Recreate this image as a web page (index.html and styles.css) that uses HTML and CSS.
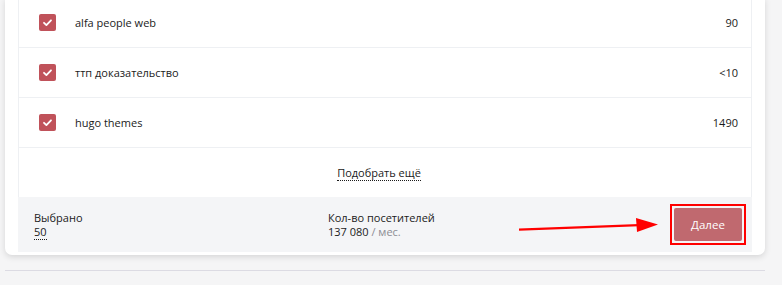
FILE: index.html
```html
<!DOCTYPE html>
<html lang="ru">
<head>
    <meta charset="UTF-8">
    <meta name="viewport" content="width=device-width, initial-scale=1.0">
    <title>Подбор запросов</title>
    <link rel="stylesheet" href="styles.css">
</head>
<body>
    <div class="page">
        <div class="card">
            <div class="list">
                <div class="row">
                    <span class="check"><svg viewBox="0 0 17 17" width="17" height="17"><path d="M5 8.8l2.4 2.3L12 6.3" fill="none" stroke="#fff" stroke-width="1.8" stroke-linecap="round" stroke-linejoin="round"/></svg></span>
                    <span class="phrase">alfa people web</span>
                    <span class="count">90</span>
                </div>
                <div class="row">
                    <span class="check"><svg viewBox="0 0 17 17" width="17" height="17"><path d="M5 8.8l2.4 2.3L12 6.3" fill="none" stroke="#fff" stroke-width="1.8" stroke-linecap="round" stroke-linejoin="round"/></svg></span>
                    <span class="phrase">ттп доказательство</span>
                    <span class="count">&lt;10</span>
                </div>
                <div class="row">
                    <span class="check"><svg viewBox="0 0 17 17" width="17" height="17"><path d="M5 8.8l2.4 2.3L12 6.3" fill="none" stroke="#fff" stroke-width="1.8" stroke-linecap="round" stroke-linejoin="round"/></svg></span>
                    <span class="phrase">hugo themes</span>
                    <span class="count">1490</span>
                </div>
                <div class="more">
                    <a class="more-link" href="#">Подобрать ещё</a>
                </div>
            </div>
            <div class="footer">
                <div class="stat">
                    <div>Выбрано</div>
                    <div><span class="dotted">50</span></div>
                </div>
                <div class="stat">
                    <div>Кол-во посетителей</div>
                    <div>137 080 <span class="muted">/ мес.</span></div>
                </div>
                <div class="highlight">
                    <button class="next">Далее</button>
                </div>
                <!-- annotation arrow pointing at the button -->
                <svg class="arrow" width="145" height="24" viewBox="0 0 145 24">
                    <path d="M0 17.7L120 13.2" stroke="#f00" stroke-width="2.2" fill="none"/>
                    <path d="M117 6L139 12.5L118 20z" fill="#f00"/>
                </svg>
            </div>
        </div>
        <div class="rule"></div>
    </div>
</body>
</html>
```

FILE: styles.css
```css
body {
    margin: 0;
    background-color: #f5f5f6;
    font-family: "Open Sans", "Noto Sans", Arial, sans-serif;
    font-size: 11px;
    color: #1b1b1b;
}

.page {
    padding: 0 17px 0 5px;
}

.card {
    margin-top: -2px;
    background-color: #fff;
    border-radius: 0 0 7px 7px;
    box-shadow: 0 2px 6px rgba(0, 0, 0, 0.13);
    padding: 0 13px 3px 13px;
}

.list {
    border-left: 1px solid #eef0f3;
    border-right: 1px solid #eef0f3;
}

.row {
    display: flex;
    align-items: center;
    height: 50px;
    box-sizing: border-box;
    padding: 0 13px 0 20px;
    border-bottom: 1px solid #eef0f3;
}

.check {
    width: 17px;
    height: 17px;
    border-radius: 2px;
    background-color: #c0525a;
    display: flex;
    margin-top: -1px;
}

.phrase {
    margin-left: 19px;
    flex: 1;
}

.count {
    text-align: right;
}

.more {
    height: 49px;
    display: flex;
    align-items: center;
    justify-content: center;
    padding-right: 12px;
}

.more-link {
    color: #1b1b1b;
    text-decoration: none;
    border-bottom: 1px dotted #1b1b1b;
    line-height: 15px;
    margin-top: 1px;
}

.footer {
    position: relative;
    display: grid;
    grid-template-columns: 294px 1fr auto;
    align-items: center;
    height: 55px;
    box-sizing: border-box;
    padding: 0 6px 0 16px;
    background-color: #f4f5f7;
}

.stat {
    line-height: 14px;
    margin-top: 1px;
}

.dotted {
    border-bottom: 1px dotted #1b1b1b;
    display: inline-block;
    line-height: 14px;
}

.muted {
    color: #8c8c93;
}

.highlight {
    border: 2px solid #f00;
    padding: 2px;
    display: flex;
}

.next {
    width: 68px;
    height: 33px;
    border: none;
    border-radius: 2px;
    background-color: #c0696f;
    color: #fff;
    font-family: inherit;
    font-size: 11.5px;
    cursor: pointer;
}

.arrow {
    position: absolute;
    left: 501px;
    top: 15px;
}

.rule {
    height: 1px;
    background-color: #dcdbe3;
    margin-top: 15px;
}
```
